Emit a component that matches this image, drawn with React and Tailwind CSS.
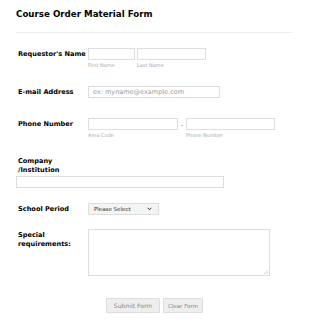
import React from "react";

const font = { fontFamily: '"DejaVu Sans", Verdana, sans-serif' };

// ── Small pieces ─────────────────────────────────────
const Sub = ({ children }) => (
  <div className="mt-[2px] text-[5px] leading-[6px] text-[#aaa]">{children}</div>
);

const Box = ({ className = "", placeholder }) => (
  <input
    placeholder={placeholder}
    className={`block h-[12px] border border-[#ddd] bg-white px-[4px] text-[6.5px] placeholder:text-[#999] outline-none ${className}`}
    style={font}
  />
);

const App = () => {
  return (
    <div className="min-h-screen w-[310px] bg-white pl-[16px] pr-[17px] pt-[8px] text-[7px] leading-[9px]" style={font}>
      <h1 className="text-[8.7px] font-bold leading-[13px] text-black">Course Order Material Form</h1>
      <div className="mt-[11px] h-px bg-[#eee]" />

      {/* ── Requestor's Name ─────────────────────────── */}
      <div className="mt-[15px] flex">
        <div className="w-[72px] shrink-0 pl-[2px] pt-[2px] text-[6.6px] font-bold leading-[9px] whitespace-nowrap">Requestor's Name</div>
        <div>
          <Box className="w-[47px]" />
          <Sub>First Name</Sub>
        </div>
        <div className="ml-[2px]">
          <Box className="w-[69px]" />
          <Sub>Last Name</Sub>
        </div>
      </div>

      {/* ── E-mail ────────────────────────────────────── */}
      <div className="mt-[18px] flex items-center">
        <div className="w-[72px] shrink-0 pl-[2px] text-[6.6px] font-bold leading-[9px]">E-mail Address</div>
        <Box className="w-[132px]" placeholder="ex: myname@example.com" />
      </div>

      {/* ── Phone ─────────────────────────────────────── */}
      <div className="mt-[20px] flex">
        <div className="w-[72px] shrink-0 pl-[2px] pt-[2px] text-[6.6px] font-bold leading-[9px]">Phone Number</div>
        <div>
          <Box className="w-[90px]" />
          <Sub>Area Code</Sub>
        </div>
        <div className="w-[8px] pt-[3px] text-center text-[6px] leading-[8px] text-[#666]">-</div>
        <div>
          <Box className="w-[89px]" />
          <Sub>Phone Number</Sub>
        </div>
      </div>

      {/* ── Company ───────────────────────────────────── */}
      <div className="mt-[19px] pl-[2px] text-[6.6px] font-bold leading-[9px]">
        Company
        <br />
        /Institution
      </div>
      <Box className="mt-[1px] w-[208px]" />

      {/* ── School Period ─────────────────────────────── */}
      <div className="mt-[15px] flex items-center">
        <div className="w-[72px] shrink-0 pl-[2px] text-[6.6px] font-bold leading-[9px]">School Period</div>
        <div className="flex h-[12px] w-[71px] items-center justify-between border border-[#ddd] bg-[#f4f4f4] pl-[5px] pr-[6px]">
          <span className="text-[5.5px] text-[#333]">Please Select</span>
          <svg width="5" height="4" viewBox="0 0 5 4">
            <path d="M0.6 0.8 L2.5 2.8 L4.4 0.8" fill="none" stroke="#333" strokeWidth="1" />
          </svg>
        </div>
      </div>

      {/* ── Special requirements ──────────────────────── */}
      <div className="mt-[14px] flex">
        <div className="w-[72px] shrink-0 pl-[2px] pt-[2px] text-[6.6px] font-bold leading-[9px]">
          Special
          <br />
          requirements:
        </div>
        <div className="relative h-[47px] w-[182px] border border-[#ddd] bg-white">
          <svg className="absolute bottom-[1px] right-[1px]" width="4" height="4" viewBox="0 0 4 4">
            <path d="M4 0 L0 4 M4 2 L2 4" stroke="#bbb" strokeWidth="0.6" />
          </svg>
        </div>
      </div>

      {/* ── Buttons ───────────────────────────────────── */}
      <div className="mt-[22px] flex gap-[3px] pl-[90px]">
        <button className="h-[15px] w-[54px] rounded-[1px] border border-[#ddd] bg-[#eee] text-[6px] leading-[8px] text-[#888]">
          Submit Form
        </button>
        <button className="h-[15px] w-[40px] rounded-[1px] border border-[#ddd] bg-[#eee] text-[5.5px] leading-[8px] text-[#888]">
          Clear Form
        </button>
      </div>
    </div>
  );
};

export default App;
